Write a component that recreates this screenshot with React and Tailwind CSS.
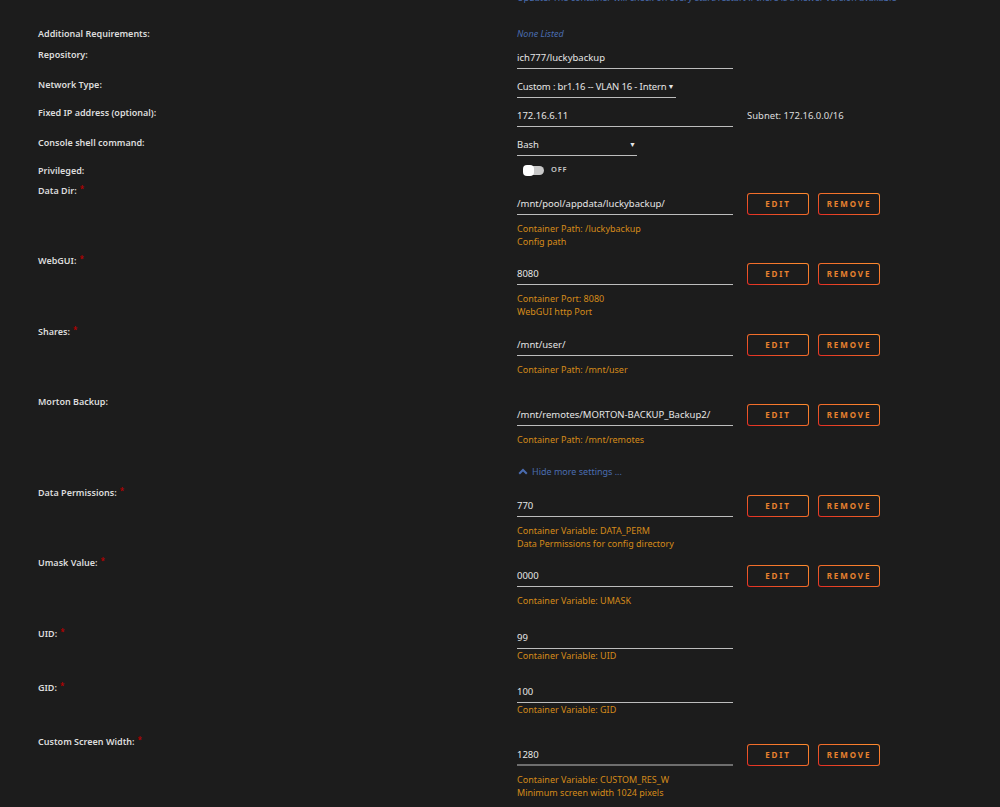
import React from "react";

const FONT = { fontFamily: '"Noto Sans", "Open Sans", Arial, sans-serif' };

function Label({ text, req }) {
  return (
    <div className="w-[517px] shrink-0 pl-[38px] pt-[1px] text-[9px] font-semibold leading-[20px] text-[#dcdcdc]">
      {text}
      {req && <span className="ml-[3px] relative -top-[2px] text-[8px] text-[#b30000]">*</span>}
    </div>
  );
}

function Btn({ children, w }) {
  return (
    <div className={`h-[22px] ${w} rounded-[3px] bg-linear-to-tr from-[#e42a24] via-[#f06a2a] to-[#ff8c2f] p-[1px]`}>
      <div className="flex h-full w-full items-center justify-center rounded-[2px] bg-[#1c1c1c] text-[8px] font-bold tracking-[1.9px] text-[#e8822f]">
        {children}
      </div>
    </div>
  );
}

function PathRow({ label, req, value, desc = [], h = "h-[70px]", focused }) {
  return (
    <div className={`flex ${h}`}>
      <Label text={label} req={req} />
      <div className="pt-[13px]">
        <div className="flex items-start">
          <div
            className={`h-[22px] w-[216px] ${
              focused ? "border-b-2 border-[#6e6e6e]" : "border-b border-[#bdbdbd]"
            } text-[9.5px] leading-[21px] text-[#e6e6e6]`}
          >
            {value}
          </div>
          <div className="ml-[14px] flex gap-[9px]">
            <Btn w="w-[62px]">EDIT</Btn>
            <Btn w="w-[62px]">REMOVE</Btn>
          </div>
        </div>
        <div className="mt-[7px] text-[9px] leading-[13px] text-[#d48a1a]">
          {desc.map((d) => (
            <div key={d}>{d}</div>
          ))}
        </div>
      </div>
    </div>
  );
}

function VarRow({ label, req, value, desc }) {
  return (
    <div className="flex h-[54px]">
      <Label text={label} req={req} />
      <div className="pt-[4px]">
        <div className="h-[22px] w-[216px] border-b border-[#bdbdbd] text-[9.5px] leading-[21px] text-[#e6e6e6]">
          {value}
        </div>
        <div className="text-[9px] leading-[13px] text-[#d48a1a]">{desc}</div>
      </div>
    </div>
  );
}

export default function App() {
  return (
    <div className="relative h-[807px] w-[1000px] overflow-hidden bg-[#1c1c1c]" style={FONT}>
      <div className="h-[22px] overflow-hidden pl-[517px]">
        <div className="-translate-y-[8px] whitespace-nowrap text-[9px] leading-[12px] text-[#4a6cb0]">
          Update: The container will check on every start/restart if there is a newer version available
        </div>
      </div>

      <div className="flex h-[22px] items-center pt-[1px]">
        <div className="w-[517px] shrink-0 pl-[38px] text-[9px] font-semibold text-[#dcdcdc]">
          Additional Requirements:
        </div>
        <div className="text-[9px] italic text-[#4a6cb0]">None Listed</div>
      </div>

      <div className="flex h-[30px]">
        <Label text="Repository:" />
        <div className="pt-[3px]">
          <div className="h-[22px] w-[216px] border-b border-[#bdbdbd] text-[9.5px] leading-[21px] text-[#e6e6e6]">
            ich777/luckybackup
          </div>
        </div>
      </div>

      <div className="flex h-[28px]">
        <Label text="Network Type:" />
        <div className="pt-[2px]">
          <div className="flex h-[22px] w-[159px] items-center whitespace-nowrap border-b border-[#bdbdbd] text-[9.5px] leading-[21px] text-[#e6e6e6]">
            <span className="tracking-[-0.15px]">Custom : br1.16 -- VLAN 16 - Intern</span>
            <span className="ml-[1px] text-[7px]">▼</span>
          </div>
        </div>
      </div>

      <div className="flex h-[30px]">
        <Label text="Fixed IP address (optional):" />
        <div className="flex items-start pt-[3px]">
          <div className="h-[22px] w-[216px] border-b border-[#bdbdbd] text-[9.5px] leading-[21px] text-[#e6e6e6]">
            172.16.6.11
          </div>
          <div className="ml-[14px] text-[9.5px] leading-[21px] text-[#dcdcdc]">Subnet: 172.16.0.0/16</div>
        </div>
      </div>

      <div className="flex h-[28px]">
        <Label text="Console shell command:" />
        <div className="pt-[2px]">
          <div className="flex h-[22px] w-[120px] items-center justify-between border-b border-[#bdbdbd] text-[9.5px] leading-[21px] text-[#e6e6e6]">
            <span>Bash</span>
            <span className="pr-[1px] text-[7px]">▼</span>
          </div>
        </div>
      </div>

      <div className="flex h-[20px]">
        <Label text="Privileged:" />
        <div className="flex items-center pl-[7px]">
          <div className="relative h-[9px] w-[20px] rounded-full bg-[#c8c8c8]">
            <div className="absolute -left-[1px] -top-[1px] h-[11px] w-[11px] rounded-[4px] bg-white" />
          </div>
          <span className="ml-[7px] text-[7.5px] font-semibold tracking-[0.8px] text-[#c8c8c8]">OFF</span>
        </div>
      </div>

      <PathRow
        label="Data Dir:"
        req
        value="/mnt/pool/appdata/luckybackup/"
        desc={["Container Path: /luckybackup", "Config path"]}
      />
      <PathRow
        label="WebGUI:"
        req
        h="h-[71px]"
        value="8080"
        desc={["Container Port: 8080", "WebGUI http Port"]}
      />
      <PathRow label="Shares:" req value="/mnt/user/" desc={["Container Path: /mnt/user"]} />
      <PathRow
        label="Morton Backup:"
        value="/mnt/remotes/MORTON-BACKUP_Backup2/"
        desc={["Container Path: /mnt/remotes"]}
      />

      <div className="flex h-[21px] items-center pl-[517px] text-[9px] text-[#4a6cb0]">
        <svg width="10" height="7" viewBox="0 0 10 7" className="ml-[1px] mr-[4px]">
          <path d="M1.2 5.8 L5 2 L8.8 5.8" fill="none" stroke="#4a6cb0" strokeWidth="2" />
        </svg>
        Hide more settings ...
      </div>

      <PathRow
        label="Data Permissions:"
        req
        value="770"
        desc={["Container Variable: DATA_PERM", "Data Permissions for config directory"]}
      />
      <PathRow
        label="Umask Value:"
        req
        h="h-[71px]"
        value="0000"
        desc={["Container Variable: UMASK"]}
      />
      <VarRow label="UID:" req value="99" desc="Container Variable: UID" />
      <VarRow label="GID:" req value="100" desc="Container Variable: GID" />
      <PathRow
        label="Custom Screen Width:"
        req
        focused
        value="1280"
        desc={["Container Variable: CUSTOM_RES_W", "Minimum screen width 1024 pixels"]}
      />
    </div>
  );
}
